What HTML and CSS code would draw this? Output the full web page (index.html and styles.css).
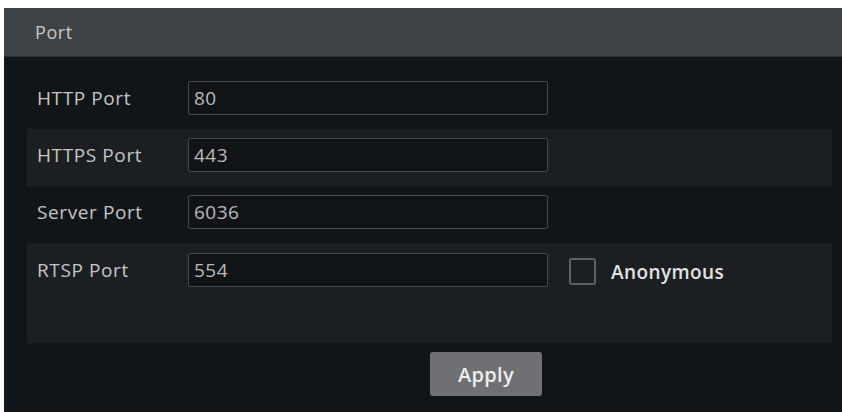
FILE: index.html
```html
<!DOCTYPE html>
<html>
<head>
<meta charset="utf-8">
<link rel="stylesheet" href="styles.css">
</head>
<body>
<div class="panel">
  <div class="header">Port</div>
  <div class="body">
    <div class="rows">
      <div class="row">
        <span class="label">HTTP Port</span>
        <div class="input">80</div>
      </div>
      <div class="row alt">
        <span class="label">HTTPS Port</span>
        <div class="input">443</div>
      </div>
      <div class="row">
        <span class="label">Server Port</span>
        <div class="input">6036</div>
      </div>
      <div class="row alt last">
        <span class="label">RTSP Port</span>
        <div class="input">554</div>
        <span class="check"></span>
        <span class="check-label">Anonymous</span>
      </div>
    </div>
    <div class="actions">
      <button class="apply">Apply</button>
    </div>
  </div>
</div>
</body>
</html>
```
FILE: styles.css
```css
html, body {
  margin: 0;
  background: #ffffff;
}
body {
  padding: 8px 0 0 4px;
  height: 412px;
  box-sizing: border-box;
  overflow: hidden;
  font-family: "Open Sans", "Noto Sans", sans-serif;
}
.panel {
  height: 404px;
  background: #121518;
  display: flex;
  flex-direction: column;
}
.header {
  height: 49px;
  background: #404346;
  color: #c6c7c8;
  font-size: 18px;
  letter-spacing: 0.6px;
  line-height: 49px;
  padding-left: 31px;
  border-bottom: 1px solid #2c2f32;
  box-sizing: border-box;
}
.body {
  flex: 1;
  padding-top: 15px;
  display: flex;
  flex-direction: column;
}
.rows {
  margin-left: 23px;
  margin-right: 10px;
}
.row {
  height: 57px;
  display: flex;
  align-items: flex-start;
  padding-top: 9px;
  box-sizing: border-box;
}
.row.alt {
  background: #1c1f22;
}
.row.last {
  height: 100px;
  padding-top: 10px;
}
.label {
  width: 161px;
  padding-left: 10px;
  box-sizing: border-box;
  color: #c4c5c6;
  font-size: 19px;
  letter-spacing: 0.6px;
  line-height: 34px;
  white-space: nowrap;
}
.input {
  width: 360px;
  height: 34px;
  box-sizing: border-box;
  border: 1px solid #46494c;
  border-radius: 2px;
  background: #111417;
  color: #b9babb;
  font-size: 19px;
  letter-spacing: 0.5px;
  line-height: 32px;
  padding-left: 5px;
}
.check {
  width: 27px;
  height: 27px;
  box-sizing: border-box;
  border: 2px solid #5d6063;
  border-radius: 3px;
  margin: 5px 0 0 21px;
}
.check-label {
  margin-left: 15px;
  color: #e2e3e4;
  font-size: 19px;
  font-weight: 600;
  letter-spacing: 0.4px;
  line-height: 38px;
}
.actions {
  display: flex;
  padding-top: 9px;
  padding-left: 426px;
}
.apply {
  width: 112px;
  height: 44px;
  border: none;
  border-radius: 3px;
  background: #6e7073;
  color: #eeeeee;
  font-family: "Open Sans", "Noto Sans", sans-serif;
  font-size: 20px;
  font-weight: 600;
  letter-spacing: 0.3px;
}
```
